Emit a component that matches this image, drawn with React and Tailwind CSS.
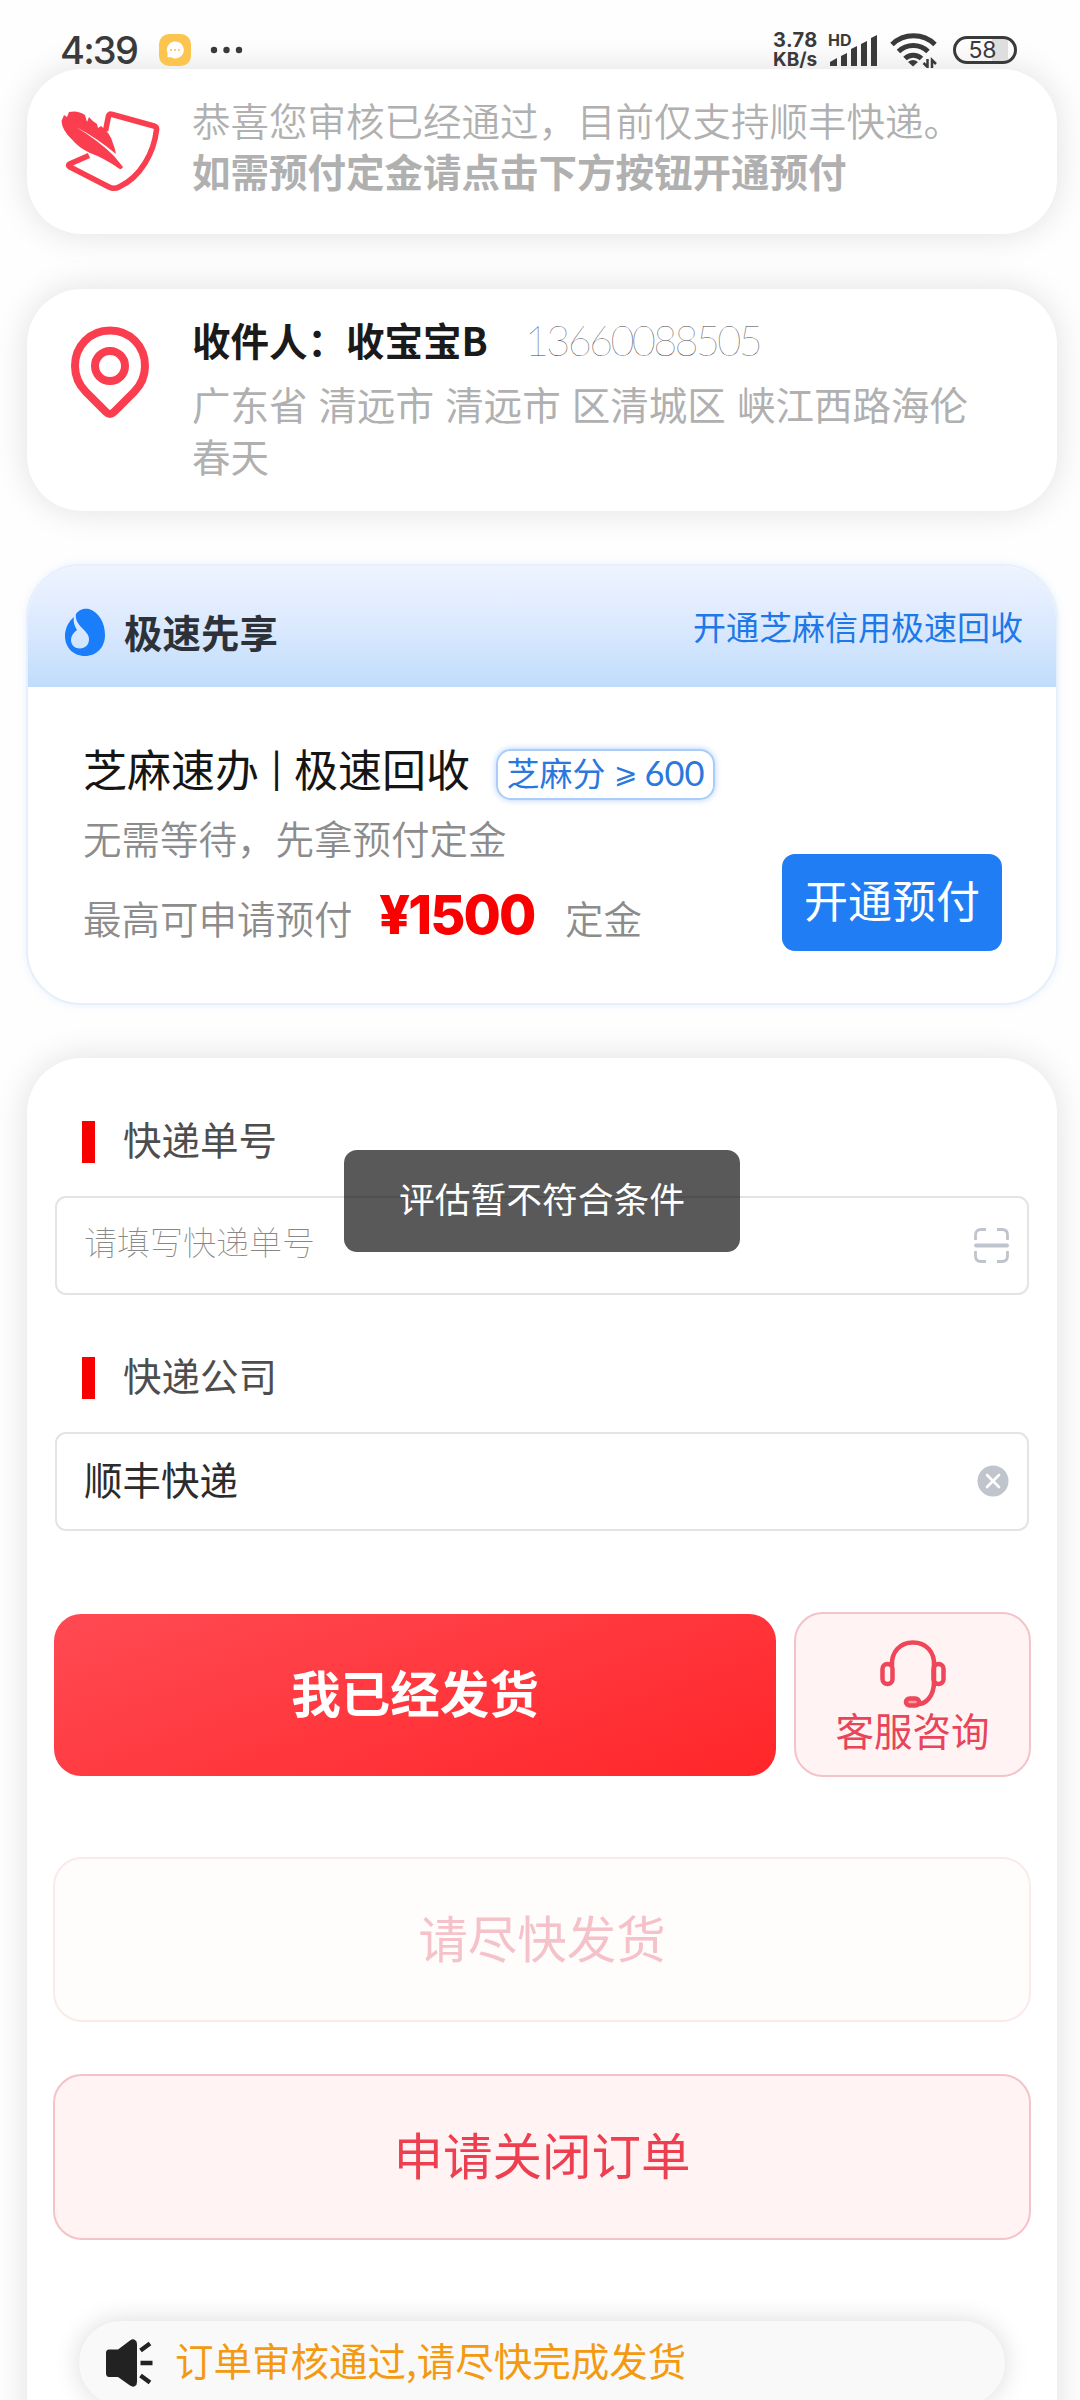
const Clip = ({ children, className }) => (
  <div className={`whitespace-nowrap ${className}`}>{children}</div>
);

function StatusBar() {
  return (
    <header className="flex h-[69px] items-start justify-between pl-[60px] pr-[63px] pt-[32px] text-[#3a3a3a]">
      <div className="flex h-[36px] items-center">
        <div className="w-[78px] font-[Inter] text-[38px] font-[450] leading-[36px] tracking-[-1.8px]">4:39</div>
        <svg className="ml-[21px]" width="32" height="32" viewBox="0 0 32 32">
          <rect width="32" height="32" rx="10" fill="#fbc550" />
          <path d="M16 7.5a8.500 8.500 0 1 1-4 15.800H8.500v-4A8.500 8.500 0 0 1 16 7.500z" fill="#fff" />
          <g fill="#fbc550"><circle cx="12" cy="16" r="1.100" /><circle cx="16" cy="16" r="1.100" /><circle cx="20" cy="16" r="1.100" /></g>
        </svg>
        <svg className="ml-[19px]" width="34" height="8" viewBox="0 0 34 8" fill="#3a3a3a">
          <circle cx="4" cy="4" r="3.200" /><circle cx="16.500" cy="4" r="3.200" /><circle cx="29" cy="4" r="3.200" />
        </svg>
      </div>
      <div className="flex h-[36px] items-start">
        <div className="-mt-[2px] w-[49px] font-[Inter] font-bold">
          <div className="text-[20px] leading-[20px] tracking-[0.4px]">3.78</div>
          <div className="text-[19px] leading-[20px]">KB/s</div>
        </div>
        <div className="relative ml-[8px] h-[34px] w-[50px]">
          <svg width="50" height="34" viewBox="0 0 50 34" fill="#3a3a3a">
            <path d="M0 34v-4l7-4v8zM11 34V24l6-3v13zM21 34V17l6-3v20zM31 34V12l6-3v25zM41 34V6l6-3v31z" />
          </svg>
          <div className="absolute -left-[2px] top-0 font-[Inter] text-[16px] font-bold leading-[16px]">HD</div>
        </div>
        <svg className="ml-[10px]" width="48" height="36" viewBox="0 0 48 36" fill="none" stroke="#3a3a3a" strokeWidth="5">
          <path d="M2 12.500a31 31 0 0 1 43 0" />
          <path d="M8.500 19.500a21 21 0 0 1 29.500 0" />
          <path d="M15 26.500a12 12 0 0 1 16.500 0" />
          <path d="M23 34.500l-5-4.500q5-4 10 0z" fill="#3a3a3a" stroke="none" />
          <path d="M37.500 27v8l-4-4M42 36v-8l4 4" strokeWidth="2.500" />
        </svg>
        <div className="relative ml-[15px] mt-[4px] flex h-[28px] w-[64px] items-center justify-center overflow-hidden rounded-full border-[3px] border-[#3a3a3a] bg-[linear-gradient(90deg,transparent_62%,#dedede_62%,#dedede_90%,transparent_90%)] font-[Inter] text-[23px] leading-[28px]">
          <span className="-ml-[5px]">58</span>
        </div>
      </div>
    </header>
  );
}

function FeatherIcon() {
  return (
    <svg width="100" height="84" viewBox="60 108 100 84">
      <path d="M105.500 131L108.500 116Q109 113.500 111.500 114.300L154 126Q157 127 156.500 130C154 152 141 177 119 187Q114 189.500 109 187L70 167Q67.500 165.500 69.500 164L89 155.500" fill="none" stroke="#fb3d50" strokeWidth="5.600" strokeLinejoin="round" />
      <path d="M61.500 121L64 115L67 117L69 112Q78 110 85 115L87 122L89 117Q93 122 97 124L98 128L101 126Q110 133 112.500 142Q115 148 116 154Q97 138 76 127Q99 141 114 156L123 167Q121.500 170 119 168.500Q104 158 90 153Q79 148 71.500 139Q62 130 61.500 121z" fill="#fb3d50" />
    </svg>
  );
}

const PinIcon = () => (
  <svg width="80" height="96" viewBox="0 0 80 96" fill="none" stroke="#fb3d50" strokeWidth="8">
    <path d="M40 4.500C20 4.500 5 20 5 40C5 52 10 60 16 66L36 86Q40 90 44 86L64 66C70 60 75 52 75 40C75 20 60 4.500 40 4.500z" />
    <circle cx="40" cy="40" r="15" />
  </svg>
);

const DropIcon = () => (
  <svg width="40" height="48" viewBox="0 0 40 48">
    <path d="M11 6C14 1 20 0 24 1C34 4 40 15 40 27C40 39 32 48 20 48C8 48 0 39 0 28C0 20 4 13 9 9C8 13 9 17 12 22C8 25 6 28 6 32C6 37 10 40.500 15 40.500C20 40.500 24 37 24 31C24 27 21 24 17 20C12 15 10 10 11 6z" fill="#1a7dfa" />
  </svg>
);

const ScanIcon = () => (
  <svg width="35" height="35" viewBox="0 0 35 35" fill="none" stroke="#c0c4cc" strokeWidth="2.800">
    <path d="M1.500 12V7Q1.500 1.500 7 1.500H12M23 1.500H28Q33.500 1.500 33.500 7V12M1.500 23V28Q1.500 33.500 7 33.500H12M23 33.500H28Q33.500 33.500 33.500 28V23" />
    <path d="M2 17.500H33" strokeWidth="4" strokeLinecap="round" />
  </svg>
);

const ClearIcon = () => (
  <svg className="-mt-[2px]" width="32" height="32" viewBox="0 0 32 32">
    <circle cx="16" cy="16" r="15.500" fill="#c0c4cc" />
    <path d="M10 10L22 22M22 10L10 22" stroke="#fff" strokeWidth="2.600" strokeLinecap="round" />
  </svg>
);

const HeadsetIcon = () => (
  <svg width="66" height="68" viewBox="0 0 66 68" fill="none" stroke="#f0465a" strokeWidth="4.500">
    <rect x="2.500" y="24" width="10" height="20" rx="5" />
    <rect x="53.500" y="24" width="10" height="20" rx="5" />
    <path d="M12 26C11 12 20 2.500 33 2.500S55 12 54 26V42C54 56 46 64 38 64" />
    <rect x="26" y="58.500" width="13" height="7" rx="3.500" fill="#f0465a" fillOpacity="0.5" />
  </svg>
);

const SpeakerIcon = () => (
  <svg width="47" height="48" viewBox="0 0 47 48">
    <path d="M0 14Q0 10.500 3 10.500H12L24 1.500Q27 -.5 29 1Q31 2 31 5V43Q31 46 29 47Q27 48.500 24 46.500L12 38H3Q0 38 0 34z" fill="#222" />
    <path d="M34.500 11.500L44 4.500M34.500 24H46.500M34.500 36.500L44 43.500" stroke="#222" strokeWidth="4.400" />
  </svg>
);

const cardClass = "mx-[27px] w-[1030px] rounded-[55px] bg-white shadow-[0_0_34px_rgba(0,0,0,0.12)]";

function Field({ label, children }) {
  return (
    <div>
      <div className="flex h-[42px] items-center pl-[55px]">
        <div className="h-[42px] w-[13px] bg-[#f80000]" />
        <Clip className="-mt-[9px] ml-[28px] text-[38.5px] leading-[42px] text-[#4d4d4d]">{label}</Clip>
      </div>
      <div className="ml-[28px] mt-[33px] flex h-[99px] w-[974px] items-center justify-between rounded-[11px] border-2 border-[#e4e4e4] pl-[27px] pr-[18px]">
        {children}
      </div>
    </div>
  );
}

export default function App() {
  return (
    <main lang="zh-CN" className="relative h-[2400px] w-[1080px] overflow-hidden bg-[#fefefe] font-['Noto_Sans_CJK_SC',sans-serif]">
      <StatusBar />

      <section className={`${cardClass} flex h-[165px] pl-[33px] pt-[25px]`}>
        <div className="mt-[14px] h-[84px] w-[100px]"><FeatherIcon /></div>
        <div className="ml-[32px] text-[38.5px] leading-[51px] text-[#b0b0b0]">
          <Clip className="font-[350]">恭喜您审核已经通过，目前仅支持顺丰快递。</Clip>
          <Clip className="font-bold">如需预付定金请点击下方按钮开通预付</Clip>
        </div>
      </section>

      <section className={`${cardClass} mt-[55px] flex h-[222px] pl-[43px] pt-[24px]`}>
        <div className="mt-[13px] h-[96px] w-[80px]"><PinIcon /></div>
        <div className="ml-[42px] text-[38.5px] leading-[52px]">
          <div className="flex h-[52px] items-center">
            <Clip className="w-[333px] font-bold text-[#1a1a1a]">收件人：收宝宝B</Clip>
            <Clip className="mt-[2px] font-[Lato] text-[41.5px] font-thin tracking-[-2.7px] text-[#444]">13660088505</Clip>
          </div>
          <div className="mt-[12px] w-[800px] text-[#b0b0b0] [word-spacing:2.5px]">
            <Clip>广东省 清远市 清远市 区清城区 峡江西路海伦</Clip>
            <Clip>春天</Clip>
          </div>
        </div>
      </section>

      <section className="mx-[26px] mt-[53px] h-[441px] w-[1032px] overflow-hidden rounded-[55px] border-2 border-[#e6effb] bg-white shadow-[0_0_8px_rgba(30,120,240,0.1)]">
        <div className="flex h-[121px] items-center justify-between bg-linear-to-b from-[#eef4ff] via-[#dbe9fe] to-[#bfdcfb] pl-[37px] pr-[33px]">
          <div className="flex items-center pt-[10px]">
            <DropIcon />
            <Clip className="-mt-[2px] ml-[19px] text-[38.5px] font-bold leading-[44px] text-[#2d3238]">极速先享</Clip>
          </div>
          <Clip className="-mt-[2px] text-[33px] leading-[40px] text-[#1f78e8]">开通芝麻信用极速回收</Clip>
        </div>
        <div className="flex justify-between pl-[55px] pr-[54px] pt-[54px]">
          <div>
            <div className="flex h-[56px] items-center text-[#151515]">
              <Clip className="-mt-[2px] w-[413px] text-[44px] leading-[56px]">芝麻速办<span className="mx-[10px] inline-flex h-[40px] w-[15px] justify-center align-top text-[36px] font-medium leading-[50px]">|</span>极速回收</Clip>
              <div className="mt-[11px] flex h-[51px] w-[219px] items-center justify-center rounded-[15px] border-2 border-[#a9ccf8] text-[33px] leading-[47px] text-[#2a78dc] shadow-[0_0_6px_rgba(30,120,240,0.35)]">
                <Clip className="-mt-[2px]">芝麻分<span className="relative -top-[3px] ml-[9px] inline-block w-[30px] text-[28px]">⩾</span><span className="font-[Lato] text-[34.5px]">600</span></Clip>
              </div>
            </div>
            <Clip className="mt-[15px] text-[38.5px] font-[350] leading-[50px] text-[#8c8c8c]">无需等待，先拿预付定金</Clip>
            <div className="mt-[27px] flex h-[56px] items-center text-[38.5px] leading-[56px] text-[#8c8c8c]">
              <Clip className="w-[296px] font-[350]">最高可申请预付</Clip>
              <Clip className="-mt-[5px] w-[186px] font-[Inter] text-[54px] font-[850] tracking-[-1.9px] text-[#fb0000]">¥1500</Clip>
              <Clip className="font-[350]">定金</Clip>
            </div>
          </div>
          <div className="mt-[113px] flex h-[97px] w-[220px] items-center justify-center rounded-[13px] bg-[#207df4] text-[44px] text-white">
            <Clip className="-mt-[7px]">开通预付</Clip>
          </div>
        </div>
      </section>

      <section className={`${cardClass} mt-[53px] h-[1500px] pt-[63px]`}>
        <Field label="快递单号">
          <Clip className="-mt-[7px] text-[33px] font-thin text-[#888]">请填写快递单号</Clip>
          <ScanIcon />
        </Field>
        <div className="h-[62px]" />
        <Field label="快递公司">
          <Clip className="-mt-[5px] text-[38.5px] text-[#2c2c2c]">顺丰快递</Clip>
          <ClearIcon />
        </Field>

        <div className="mx-[26px] mt-[81px] flex h-[165px] items-center justify-between pl-[1px]">
          <div className="flex h-[162px] w-[722px] items-center justify-center rounded-[27px] bg-linear-[160deg,#ff4a53,#ff2629] text-[49.5px] font-bold text-white">
            <Clip className="-mt-[5px]">我已经发货</Clip>
          </div>
          <div className="flex h-[165px] w-[237px] flex-col items-center rounded-[29px] border-2 border-[#f3c3c9] bg-[#fff4f3] pt-[26px]">
            <HeadsetIcon />
            <Clip className="-mt-[1px] text-[38.5px] leading-[44px] text-[#e8455a]">客服咨询</Clip>
          </div>
        </div>

        <div className="mx-[26px] mt-[80px] flex h-[165px] items-center justify-center rounded-[29px] border-2 border-[#faeaea] bg-[#fffdfc] text-[49.5px] text-[#f6c2c9]">
          <Clip className="-mt-[4px]">请尽快发货</Clip>
        </div>
        <div className="mx-[26px] mt-[52px] flex h-[166px] items-center justify-center rounded-[29px] border-2 border-[#f3c3c9] bg-[#fff4f3] text-[49.5px] text-[#ee3f50]">
          <Clip className="-mt-[5px]">申请关闭订单</Clip>
        </div>

        <div className="ml-[52px] mt-[81px] flex h-[84px] w-[926px] items-center rounded-full bg-[#f9f9f9] pl-[27px] shadow-[0_0_26px_rgba(0,0,0,0.15)]">
          <SpeakerIcon />
          <Clip className="-mt-[6px] ml-[22px] text-[38.5px] text-[#f39a11]">订单审核通过,请尽快完成发货</Clip>
        </div>
      </section>

      <div role="status" className="absolute left-[344px] top-[1150px] flex h-[102px] w-[396px] items-center justify-center rounded-[13px] bg-black/65 text-[35.75px] text-white">
        <Clip className="-mt-[7px]">评估暂不符合条件</Clip>
      </div>
    </main>
  );
}
